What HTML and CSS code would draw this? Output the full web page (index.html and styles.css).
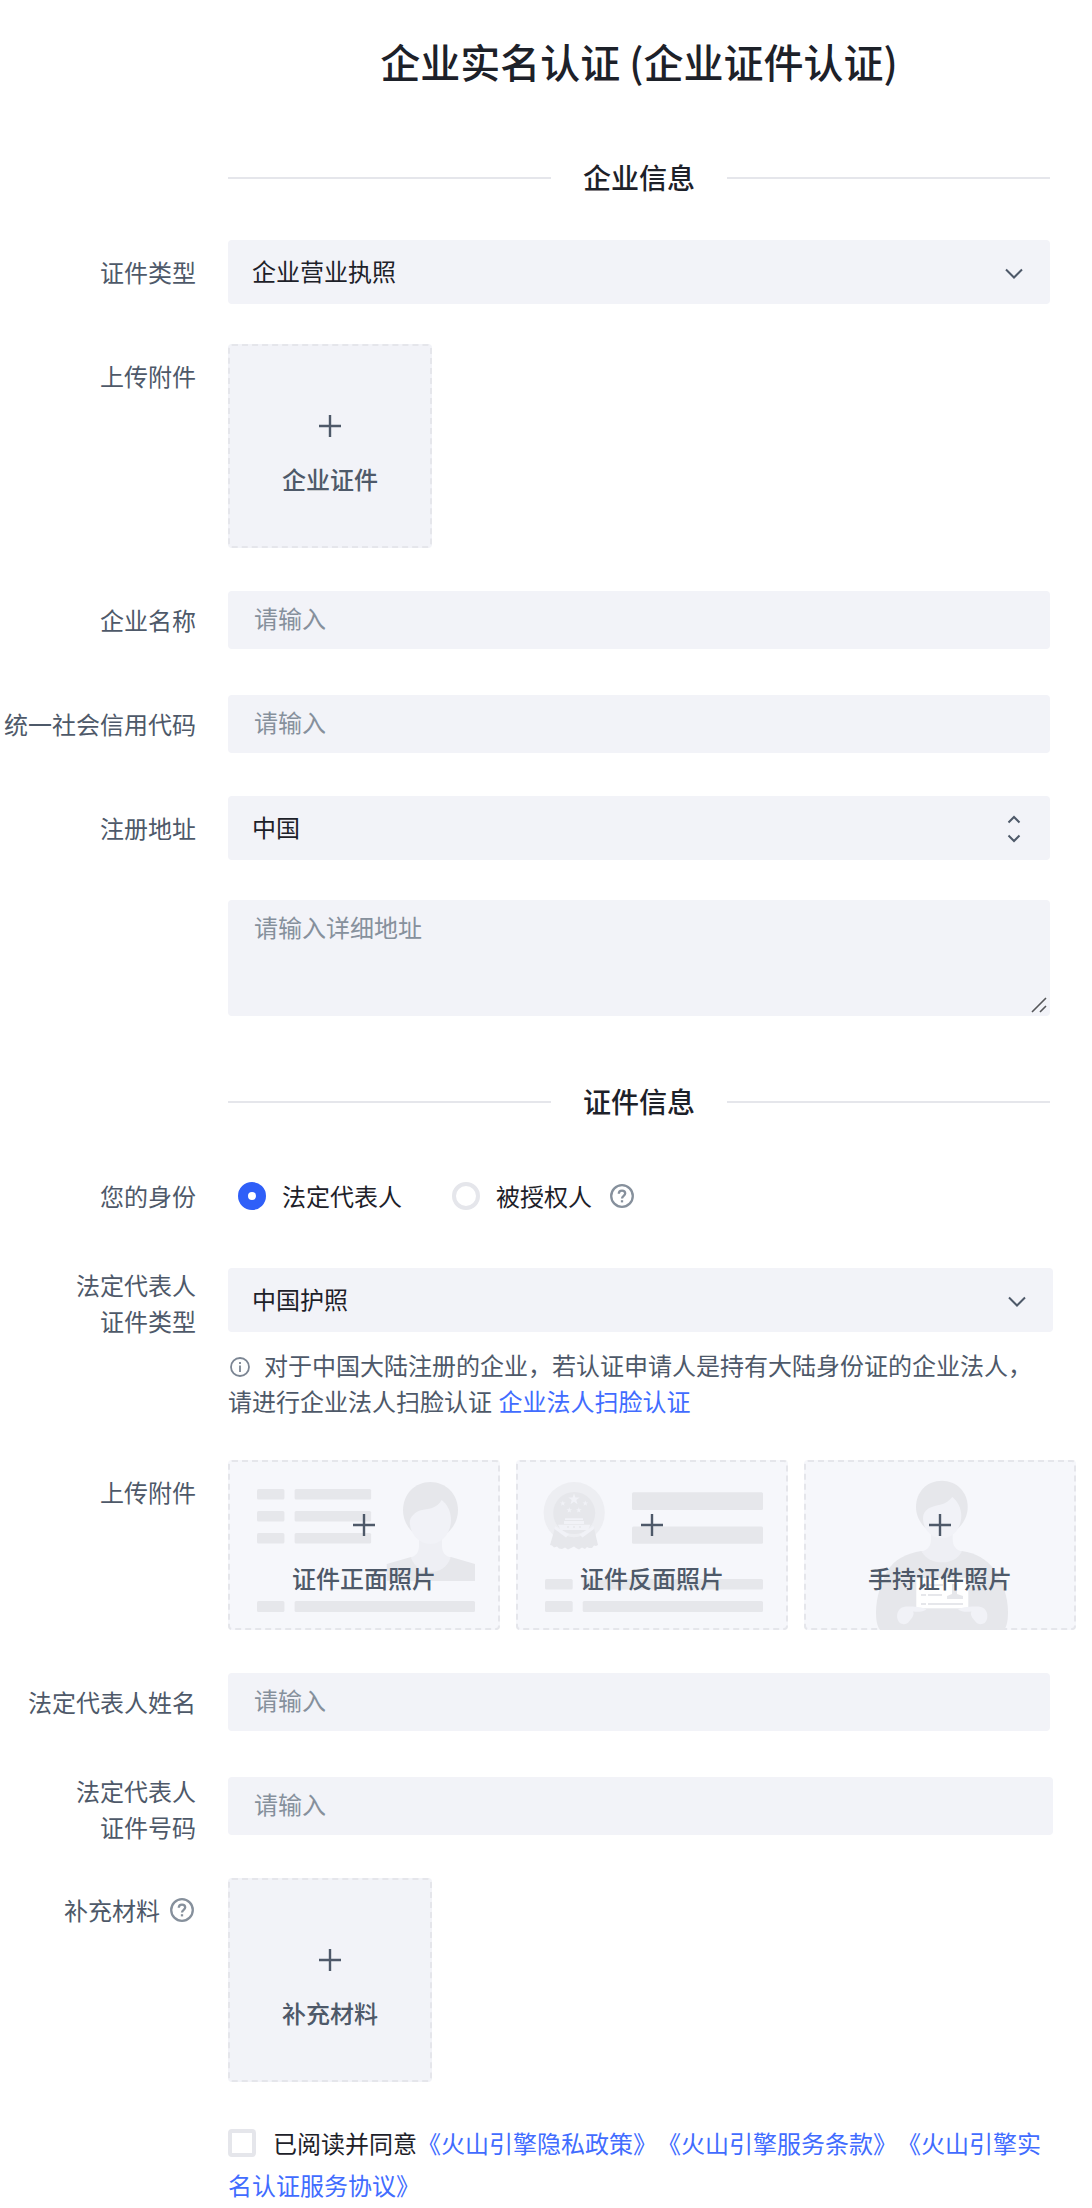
FILE: index.html
```html
<!DOCTYPE html>
<html lang="zh-CN">
<head>
<meta charset="utf-8">
<title>企业实名认证</title>
<link rel="stylesheet" href="styles.css">
</head>
<body>
<main class="page">
  <h1 class="title">企业实名认证 (企业证件认证)</h1>

  <h2 class="section">企业信息</h2>
  <div class="row">
    <div class="label">证件类型</div>
    <div class="select">企业营业执照
      <svg class="chevron" viewBox="0 0 18 12"><path d="M1 1.5l8 8 8-8"/></svg>
    </div>
  </div>
  <div class="row">
    <div class="label">上传附件</div>
    <div class="upload">
      <svg class="plus" viewBox="0 0 22 22"><path d="M11 0v22M0 11h22"/></svg>
      <span>企业证件</span>
    </div>
  </div>
  <div class="row">
    <div class="label">企业名称</div>
    <input class="input" placeholder="请输入">
  </div>
  <div class="row">
    <div class="label">统一社会信用代码</div>
    <input class="input" placeholder="请输入">
  </div>
  <div class="row">
    <div class="label">注册地址</div>
    <div class="select">中国
      <svg class="updown" viewBox="0 0 14 28"><path d="M1.5 7.5L7 2l5.500 5.500M1.500 20.500L7 26l5.500-5.500"/></svg>
    </div>
  </div>
  <div class="row">
    <div class="label"></div>
    <div class="area-wrap">
      <textarea class="area" placeholder="请输入详细地址"></textarea>
      <svg class="grip" viewBox="0 0 16 16"><path d="M1 15L15 1M9 15l6-6"/></svg>
    </div>
  </div>

  <h2 class="section section-second">证件信息</h2>
  <div class="row">
    <div class="label">您的身份</div>
    <div class="radios">
      <span class="radio radio-on"></span><span class="radio-text">法定代表人</span>
      <span class="radio"></span><span class="radio-text radio-text-last">被授权人</span>
      <svg class="help" viewBox="0 0 24 24"><circle cx="12" cy="12" r="10.800"/><path d="M8.800 9.800c0-1.900 1.400-3.100 3.200-3.100s3.200 1.200 3.200 2.900c0 2.200-3.200 2.400-3.200 4.900"/><path d="M12 16.200v2.200"/></svg>
    </div>
  </div>
  <div class="row">
    <div class="label label-two">法定代表人<br>证件类型</div>
    <div>
      <div class="select wide">中国护照
        <svg class="chevron" viewBox="0 0 18 12"><path d="M1 1.500l8 8 8-8"/></svg>
      </div>
      <p class="note"><svg class="info" viewBox="0 0 20 20"><circle cx="10" cy="10" r="9"/><path d="M10 8.500V15M10 5v2"/></svg>对于中国大陆注册的企业，若认证申请人是持有大陆身份证的企业法人，<br>请进行企业法人扫脸认证 <a class="link note-link">企业法人扫脸认证</a></p>
    </div>
  </div>
  <div class="row">
    <div class="label">上传附件</div>
    <div class="cards">
      <div class="card">
        <svg class="art" viewBox="0 0 272 170">
          <g class="tone">
            <rect x="29" y="29" width="27.400" height="10.500" rx="1.500"/><rect x="66.600" y="29" width="76.500" height="10.500" rx="1.500"/>
            <rect x="29" y="51" width="27.400" height="10.500" rx="1.500"/><rect x="66.600" y="51" width="76.500" height="10.500" rx="1.500"/>
            <rect x="29" y="73" width="27.400" height="10.500" rx="1.500"/><rect x="66.600" y="73" width="76.500" height="10.500" rx="1.500"/>
            <rect x="29" y="141" width="27.400" height="11" rx="1.500"/><rect x="66.600" y="141" width="180.400" height="11" rx="1.500"/>
            <path d="M202.300 22C217.800 22 230 34 230 50.500C230 65 218 79 202.300 80C187 79 175 65 175 50.500C175 34 187 22 202.300 22Z"/>
            <path d="M158.700 104L183 97H223L247 104V121H158.700Z"/>
          </g>
          <path class="neck" d="M191 72H214V86C214 92 217 96 222.700 97.500C219 108 211 112 202.500 112C193 112 187 107 182.700 97.500C188 96 191 92 191 86Z"/>
          <path class="face" d="M213.700 40C208 49 201 48.500 192 50.500C187 52 182 57 181.700 62C182 74 191 84 202.500 84C214 84 223 73 223 60C223 51 219 44 213.700 40Z"/>
        </svg>
        <svg class="plus" viewBox="0 0 22 22"><path d="M11 0v22M0 11h22"/></svg>
        <span>证件正面照片</span>
      </div>
      <div class="card">
        <svg class="art" viewBox="0 0 272 170">
          <circle class="ring" cx="58.200" cy="52.700" r="30.600"/>
          <g class="tone">
            <circle cx="58.200" cy="53" r="21"/>
            <path d="M39 68L50 75C54 78 62 78 66 75L78 68L82 85L80 86L78 85.500L76 88H73L71 87L69 89L66 87.500L63 89.500L60 88L58 86.500L55 88L52 89.500L49 87.500L46 89L43 88.500L41 86.500L38 87.500L36 85.500L34 85Z"/>
            <rect x="116" y="32.300" width="131" height="17.700" rx="1.500"/><rect x="116" y="66.500" width="131" height="17.300" rx="1.500"/>
            <rect x="29" y="119" width="27.700" height="10.500" rx="1.500"/><rect x="66.700" y="119" width="180.300" height="10.500" rx="1.500"/>
            <rect x="29" y="141" width="27.700" height="11" rx="1.500"/><rect x="66.700" y="141" width="180.300" height="11" rx="1.500"/>
          </g>
          <g class="face">
            <path d="M58 33.500l1.400 4h4.300l-3.400 2.600 1.200 4.100-3.500-2.400-3.500 2.400 1.200-4.100-3.400-2.600h4.300z"/>
            <path id="star" d="M46.800 40.500l.7 2h2.100l-1.700 1.300.6 2-1.700-1.200-1.700 1.200.6-2-1.700-1.300h2.100z"/>
            <use href="#star" x="22.500"/><use href="#star" x="6.500" y="6.800"/><use href="#star" x="16" y="6.800"/>
            <path d="M49 58.300H67V60H49ZM48 61H68V64H48ZM42 64.800H74.500L72 70H44.500Z"/>
            <path d="M39 66L53 74.500L50 77.500L38.500 69ZM77.500 66L63.500 74.500L66.500 77.500L78 69Z"/>
          </g>
          <g class="tone"><circle cx="52" cy="67" r="1"/><circle cx="58" cy="67" r="1"/><circle cx="64" cy="67" r="1"/></g>
        </svg>
        <svg class="plus" viewBox="0 0 22 22"><path d="M11 0v22M0 11h22"/></svg>
        <span>证件反面照片</span>
      </div>
      <div class="card">
        <svg class="art" viewBox="0 0 272 170">
          <g class="tone">
            <path d="M137.800 20.700C152.500 20.700 163.700 32 163.700 47C163.700 61 153 74 137.800 75C123 74 112 61 112 47C112 32 123 20.700 137.800 20.700Z"/>
            <path d="M117.300 91C103 93 90 100 84 110C77 122 72 138 72 152C72 160 73 166 76 170H200C203 166 204 160 204 152C204 138 199 121 190 109C182 99 172 93 158 91Z"/>
          </g>
          <path class="neck" d="M127 66H148.700V79C148.700 86 152 90 158 91.500C154 99 147 102.300 138 102.300C129 102.300 122 99 117.300 91.500C124 90 127 86 127 79Z"/>
          <path class="face" d="M148.300 37C142 45 136 44 128 47C122 49 119 53 119 58C119 69 127 78.300 138 78.300C149 78.300 157.300 68 157.300 56C157.300 48 153.500 41 148.300 37Z"/>
          <rect class="paper" x="112.300" y="118" width="52" height="30.300"/>
          <path class="tone" d="M117 124H122V126H117ZM124 124H139V126H124ZM117 134H122V136H117ZM124 134H138V136H124ZM117 143H122V145H117ZM124 143H159V145H124ZM148 124H153V134L159 136V139H143V136L148 134Z"/>
          <g class="face">
            <path d="M122.500 149.500C120 147 109 146 102 146.500C95 147 92 153 93.500 159C95 165 102 166 105.500 161C109 157 110.500 154 109 151.500C114 152 119 152 122.500 149.500Z"/>
            <path d="M154 149.500C156.500 147 167.500 146 174.500 146.500C181.500 147 184.500 153 183 159C181.500 165 174.500 166 171 161C167.500 157 166 154 167.500 151.500C162.500 152 157.500 152 154 149.500Z"/>
          </g>
        </svg>
        <svg class="plus" viewBox="0 0 22 22"><path d="M11 0v22M0 11h22"/></svg>
        <span>手持证件照片</span>
      </div>
    </div>
  </div>
  <div class="row">
    <div class="label">法定代表人姓名</div>
    <input class="input" placeholder="请输入">
  </div>
  <div class="row">
    <div class="label label-two">法定代表人<br>证件号码</div>
    <input class="input wide" placeholder="请输入">
  </div>
  <div class="row">
    <div class="label label-help">补充材料
      <svg class="help" viewBox="0 0 24 24"><circle cx="12" cy="12" r="10.800"/><path d="M8.800 9.800c0-1.900 1.400-3.100 3.200-3.100s3.200 1.200 3.200 2.900c0 2.200-3.200 2.400-3.200 4.900"/><path d="M12 16.200v2.200"/></svg>
    </div>
    <div class="upload">
      <svg class="plus" viewBox="0 0 22 22"><path d="M11 0v22M0 11h22"/></svg>
      <span>补充材料</span>
    </div>
  </div>
  <div class="row">
    <div class="label"></div>
    <p class="agree"><span class="checkbox"></span>已阅读并同意<a class="link">《火山引擎隐私政策》</a><a class="link">《火山引擎服务条款》</a><a class="link">《火山引擎实<br>名认证服务协议》</a></p>
  </div>
</main>
</body>
</html>
```

FILE: styles.css
```css
* { box-sizing: border-box; }
html, body { margin: 0; height: 2208px; overflow: hidden; background: #fff; }
body, input, textarea { font-family: "Noto Sans CJK SC", sans-serif; font-size: 24px; }
body { color: #1d2129; line-height: 36px; text-spacing-trim: space-all; }
.page { width: 1092px; height: 2208px; overflow: hidden; }

.title {
  margin: 33px 42px 0 228px;
  text-align: center;
  font-size: 40px;
  line-height: 56px;
  font-weight: 500;
}
.section {
  display: flex;
  align-items: center;
  gap: 32px;
  margin: 68px 42px 43px 228px;
  font-size: 28px;
  line-height: 40px;
  font-weight: 500;
}
.section::before, .section::after {
  content: "";
  flex: 1;
  height: 2px;
  margin-top: 2px;
  background: #e5e6eb;
}
.section-second { margin: 65px 42px 43px 228px; }

.row {
  display: grid;
  grid-template-columns: 196px 822px;
  column-gap: 32px;
  align-items: start;
  min-height: 64px;
  margin-bottom: 40px;
}
.label {
  padding-top: 14px;
  text-align: right;
  white-space: nowrap;
  color: #4e5969;
}
.label-two { height: 64px; margin-top: -1px; padding-top: 0; }
.label-help {
  display: flex;
  justify-content: flex-end;
  gap: 10px;
  padding-right: 2px;
}
.label-help .help { margin-top: 6px; }

.select {
  display: flex;
  align-items: center;
  justify-content: space-between;
  height: 64px;
  padding: 0 27px 2px 24px;
  border-radius: 4px;
  background: #f2f3f8;
}
.wide { width: 825px; }
.chevron, .updown, .plus, .grip, .help, .info {
  fill: none;
  stroke: #4e5969;
  stroke-width: 2;
}
.chevron { width: 18px; height: 12px; margin-top: 6px; }
.updown { width: 14px; height: 28px; margin-right: 2px; margin-top: 4px; }
.help { flex: none; width: 24px; height: 24px; stroke: #86909c; stroke-width: 2.300; }

.input {
  height: 58px;
  margin: 3px 0;
  padding: 0 26px 6px;
  border: 0;
  border-radius: 4px;
  background: #f2f3f8;
}
.input::placeholder, .area::placeholder { color: #86909c; opacity: 1; }

.area-wrap { position: relative; height: 116px; }
.area {
  display: block;
  width: 100%;
  height: 100%;
  padding: 9px 26px;
  border: 0;
  border-radius: 4px;
  resize: none;
  line-height: 36px;
  background: #f2f3f8;
}
.grip {
  position: absolute;
  right: 3px;
  bottom: 3px;
  width: 16px;
  height: 16px;
  stroke: #55565a;
  stroke-width: 1.600;
}

.upload, .card {
  display: flex;
  flex-direction: column;
  align-items: center;
  border: 2px dashed #e5e6eb;
  border-radius: 4px;
  font-weight: 500;
  color: #4e5969;
}
.upload {
  width: 204px;
  height: 204px;
  padding-top: 69px;
  gap: 24px;
  background: #f2f3f8;
}
.plus { position: relative; flex: none; width: 22px; height: 22px; stroke-width: 2.400; }

.radios { display: flex; align-items: center; height: 64px; padding-left: 10px; }
.radio {
  width: 28px;
  height: 28px;
  border: 4px solid #e5e6eb;
  border-radius: 50%;
}
.radio-on { border: 10px solid #2f5ff8; }
.radio-text { margin: 0 50px 0 16px; }
.radio-text-last { margin-right: 18px; }

.note { margin: 15px 0 0; padding-bottom: 1px; color: #4e5969; white-space: nowrap; }
.info {
  width: 20px;
  height: 20px;
  margin: 0 14px -2px 2px;
  stroke: #7b8593;
  stroke-width: 1.800;
}
.link { color: #416cff; }
.note-link { margin-left: 1px; }

.cards { display: flex; gap: 16px; }
.card {
  position: relative;
  flex: none;
  width: 272px;
  height: 170px;
  padding-top: 52px;
  gap: 24px;
  background: #f6f7fb;
}
.card span { position: relative; }
.art { position: absolute; left: -2px; top: -2px; width: 272px; height: 170px; }
.tone { fill: #e6e7eb; }
.neck { fill: #eeeff4; }
.face { fill: #f1f2f7; }
.ring { fill: #edeef2; }
.paper { fill: #fff; }

.agree { margin: 0; line-height: 42px; white-space: nowrap; }
.checkbox {
  display: inline-block;
  width: 28px;
  height: 28px;
  margin: 0 17px 0 0;
  vertical-align: -4px;
  border: 4px solid #e5e6eb;
  border-radius: 4px;
}
```
